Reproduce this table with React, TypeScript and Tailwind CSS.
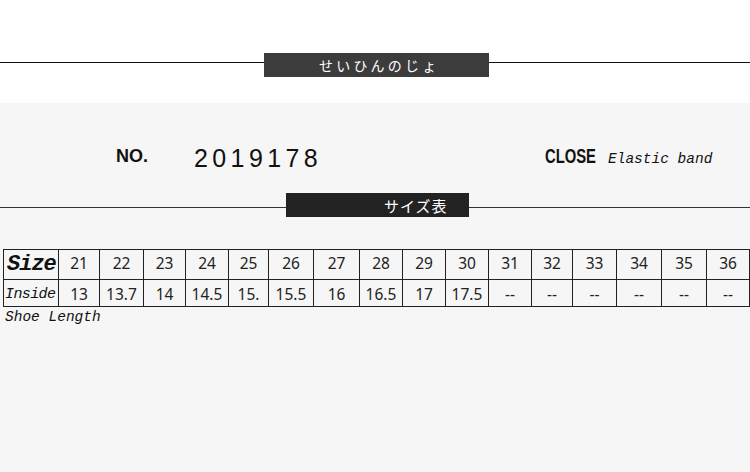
import React from "react";

const widths = [55, 41, 44, 42, 43, 40, 45, 46, 43, 43, 43, 43, 41, 44, 45, 45, 43];
const sizes = ["21", "22", "23", "24", "25", "26", "27", "28", "29", "30", "31", "32", "33", "34", "35", "36"];
const inside = ["13", "13.7", "14", "14.5", "15.", "15.5", "16", "16.5", "17", "17.5", "--", "--", "--", "--", "--", "--"];

const numFont = { fontFamily: '"Noto Sans", "Open Sans", sans-serif' };
const mono = { fontFamily: '"Liberation Mono", monospace' };

export default function App() {
  return (
    <div className="w-[750px] h-[472px] bg-white overflow-hidden flex flex-col">
      {/* top title */}
      <div className="h-[103px] pt-[53px] flex items-start">
        <div className="w-[264px] h-px mt-[9px] bg-[#111]" />
        <div
          className="w-[225px] h-[24px] bg-[#3c3c3c] text-white text-[14px] leading-none tracking-[3.2px] flex items-center pl-[55px]"
          style={{ fontFamily: '"Noto Sans CJK JP", sans-serif' }}
        >
          せいひんのじょ
        </div>
        <div className="flex-1 h-px mt-[9px] bg-[#111]" />
      </div>

      {/* gray body */}
      <div className="flex-1 bg-[#f6f6f6] flex flex-col">
        <div className="h-[90px] flex items-start pl-[116px] text-[#111]">
          <div
            className="w-[78px] mt-[44px] text-[18px] font-bold leading-none"
            style={{ fontFamily: '"Liberation Sans", Arial, sans-serif' }}
          >
            NO.
          </div>
          <div
            className="w-[351px] mt-[43px] text-[25px] leading-none tracking-[4.4px]"
            style={{ fontFamily: '"Liberation Sans", Arial, sans-serif' }}
          >
            2019178
          </div>
          <div className="w-[63px] mt-[42px] whitespace-nowrap">
            <span
              className="inline-block text-[20px] font-bold leading-none scale-x-[0.74] origin-left"
              style={{ fontFamily: '"Liberation Sans", Arial, sans-serif' }}
            >
              CLOSE
            </span>
          </div>
          <div className="mt-[49px] text-[14.5px] italic leading-none whitespace-nowrap" style={mono}>
            Elastic band
          </div>
        </div>

        {/* size chart title */}
        <div className="h-[24px] flex items-start">
          <div className="w-[286px] h-px mt-[14px] bg-[#333]" />
          <div
            className="w-[183px] h-[24px] bg-[#222] text-white text-[15px] leading-none flex items-center pl-[98px] tracking-[1px]"
            style={{ fontFamily: '"Noto Sans CJK JP", sans-serif' }}
          >
            サイズ表
          </div>
          <div className="flex-1 h-px mt-[14px] bg-[#333]" />
        </div>

        {/* table */}
        <div className="mt-[32px] ml-[3px] w-[747px] border-l border-t border-[#222] text-[#222]">
          <div className="flex h-[30px]">
            {widths.map((w, i) => (
              <div
                key={i}
                className="border-r border-b border-[#222] flex items-center justify-center shrink-0"
                style={{ width: w }}
              >
                {i === 0 ? (
                  <span className="w-full pl-[3px] text-[22px] tracking-[-1px] italic font-bold leading-none text-[#111]" style={mono}>
                    Size
                  </span>
                ) : (
                  <span className="text-[15.5px] leading-none pb-[2px]" style={numFont}>
                    {sizes[i - 1]}
                  </span>
                )}
              </div>
            ))}
          </div>
          <div className="flex h-[27px]">
            {widths.map((w, i) => (
              <div
                key={i}
                className="border-r border-b border-[#222] flex items-center justify-center shrink-0"
                style={{ width: w }}
              >
                {i === 0 ? (
                  <span className="w-full pl-[1px] pt-[3px] text-[15px] tracking-[-0.6px] italic leading-none text-[#111]" style={mono}>
                    Inside
                  </span>
                ) : (
                  <span className="text-[15.5px] leading-none pt-[3px]" style={numFont}>
                    {inside[i - 1]}
                  </span>
                )}
              </div>
            ))}
          </div>
        </div>
        <div className="ml-[5px] mt-[3px] text-[14.5px] italic leading-none text-[#111]" style={mono}>
          Shoe Length
        </div>
      </div>
    </div>
  );
}
